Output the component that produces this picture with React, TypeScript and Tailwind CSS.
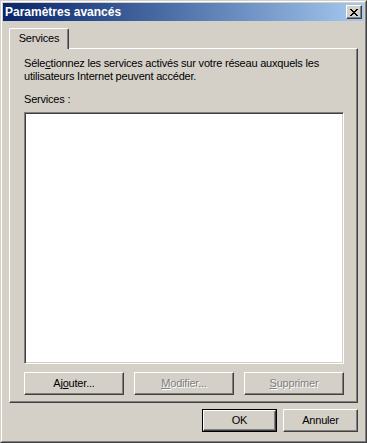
import React from "react";

const font = { fontFamily: '"Liberation Sans", Arial, sans-serif' };

function PushButton({
  children,
  disabled,
  isDefault,
  className,
}: {
  children: React.ReactNode;
  disabled?: boolean;
  isDefault?: boolean;
  className?: string;
}) {
  const inner = (
    <div className="flex h-full w-full items-center justify-center border-t border-l border-white border-r border-b border-r-[#404040] border-b-[#404040] shadow-[inset_-1px_-1px_0_#808080] bg-[#d4d0c8]">
      <span
        className={
          disabled
            ? "text-[11px] leading-[13px] tracking-[-0.2px] text-[#808080] [text-shadow:1px_1px_0_#ffffff]"
            : "text-[11px] leading-[13px] tracking-[-0.2px] text-black"
        }
      >
        {children}
      </span>
    </div>
  );
  return (
    <div className={className}>
      {isDefault ? (
        <div className="h-full w-full border border-black">{inner}</div>
      ) : (
        inner
      )}
    </div>
  );
}

export default function App() {
  return (
    <div
      className="w-[367px] h-[443px] border-t border-l border-[#d4d0c8] border-r border-b border-r-[#404040] border-b-[#404040] bg-[#d4d0c8] select-none"
      style={font}
    >
      <div className="flex h-full w-full flex-col border-t border-l border-white border-r border-b border-r-[#808080] border-b-[#808080] p-px">
        {/* Title bar */}
        <div className="flex h-[18px] items-center justify-between bg-gradient-to-r from-[#0a246a] to-[#a6caf0] pl-[2px] pr-[2px]">
          <span className="text-[12px] font-bold leading-[14px] text-white">
            Paramètres avancés
          </span>
          <div className="flex h-[14px] w-[16px] items-center justify-center border-t border-l border-white border-r border-b border-r-[#404040] border-b-[#404040] shadow-[inset_-1px_-1px_0_#808080] bg-[#d4d0c8]">
            <svg width="8" height="7" viewBox="0 0 8 7" shapeRendering="crispEdges">
              <path
                d="M0 0h2v1H0zM6 0h2v1H6zM1 1h2v1H1zM5 1h2v1H5zM2 2h4v1H2zM3 3h2v1H3zM2 4h4v1H2zM1 5h2v1H1zM5 5h2v1H5zM0 6h2v1H0zM6 6h2v1H6z"
                fill="#000"
              />
            </svg>
          </div>
        </div>

        {/* Body */}
        <div className="flex flex-1 flex-col px-[6px] pt-[7px]">
          {/* Tab strip */}
          <div className="flex">
            <div className="relative z-10 -mb-px flex h-[21px] w-[60px] items-start justify-center rounded-tl-[2px] rounded-tr-[2px] border-t border-l border-white border-r border-r-[#404040] bg-[#d4d0c8] pt-[3px] shadow-[inset_-1px_0_0_#808080]">
              <span className="text-[11px] leading-[13px] tracking-[-0.2px] text-black">Services</span>
            </div>
          </div>

          {/* Panel */}
          <div className="flex h-[355px] flex-col border-t border-l border-white border-r border-b border-r-[#404040] border-b-[#404040] shadow-[inset_-1px_-1px_0_#808080] px-[14px] pt-[8px]">
            <p className="text-[11px] leading-[13px] tracking-[-0.2px] text-black">
              Séle<u>c</u>tionnez les services activés sur votre réseau auxquels les
              <br />
              utilisateurs Internet peuvent accéder.
            </p>
            <p className="mt-[10px] text-[11px] leading-[13px] tracking-[-0.2px] text-black">Services :</p>
            <div className="mt-[6px] h-[252px] w-[320px] border-t border-l border-[#808080] border-r border-b border-r-white border-b-white bg-white shadow-[inset_1px_1px_0_#404040,inset_-1px_-1px_0_#d4d0c8]" />
            <div className="mt-[8px] flex w-[320px] gap-[10px]">
              <PushButton className="h-[23px] w-[100px]">
                Aj<u>o</u>uter...
              </PushButton>
              <PushButton className="h-[23px] w-[100px]" disabled>
                <u>M</u>odifier...
              </PushButton>
              <PushButton className="h-[23px] w-[100px]" disabled>
                <u>S</u>upprimer
              </PushButton>
            </div>
          </div>

          {/* Dialog buttons */}
          <div className="mt-[6px] flex justify-end gap-[6px]">
            <PushButton className="h-[23px] w-[75px]" isDefault>
              OK
            </PushButton>
            <PushButton className="h-[23px] w-[75px]">Annuler</PushButton>
          </div>
        </div>
      </div>
    </div>
  );
}
